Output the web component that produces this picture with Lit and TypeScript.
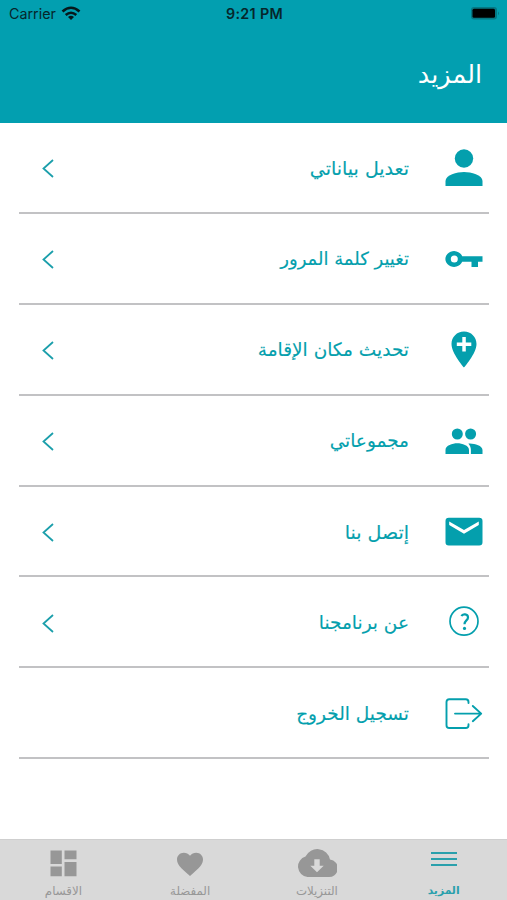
import { LitElement, html, css, svg, nothing } from "lit";
import { customElement } from "lit/decorators.js";

const icons: Record<string, unknown> = {
  person: svg`<circle cx="20" cy="10.500" r="9.200"/><path d="M1.500 38V33C1.500 27 13 24 20 24S38.500 27 38.500 33V38Z"/>`,
  key: svg`<path fill-rule="evenodd" d="M18.200 17.200A8.700 7.900 0 1 0 18.200 22.800H27.500V28H34V22.800H38.500V17.200ZM10.300 16.500a3.500 3.500 0 1 1 0 7a3.500 3.500 0 0 1 0-7Z"/>`,
  place: svg`<path fill-rule="evenodd" d="M20 1.500C12.900 1.500 7.500 7 7.500 14C7.500 23.500 20 37.500 20 37.500S32.500 23.500 32.500 14C32.500 7 27.100 1.500 20 1.500ZM18.300 7h3.500v5.400h5.500v3.500h-5.500v5.500h-3.500v-5.500h-5.500v-3.500h5.500Z"/>`,
  group: svg`<circle cx="13.300" cy="13" r="5.500"/><circle cx="26.600" cy="13" r="5.500"/><path d="M1.500 33v-4c0-4.500 7-6.700 11.800-6.700s11.700 2.200 11.700 6.700v4ZM26 22.500c5 .3 12.500 2 12.500 6.500v4H26.900v-4c0-2.600-1-4.700-2.500-6.500Z"/>`,
  mail: svg`<path fill-rule="evenodd" d="M4.800 5.800H35.200q3.300 0 3.300 3.300V30.200q0 3.300-3.300 3.300H4.800q-3.300 0-3.300-3.300V9.100q0-3.300 3.300-3.300ZM5.200 9.400V13L20 21.700L34.800 13V9.400L20 18.100Z"/>`,
  help: svg`<circle cx="20" cy="18.200" r="14" fill="none" stroke="currentColor" stroke-width="1.700"/><path d="M17.500 13.200C18.500 10.400 24 10.700 24 14.400C24 17.400 20.500 17.400 20.500 21.200" fill="none" stroke="currentColor" stroke-width="2.200"/><circle cx="20.500" cy="25.400" r="1.600"/>`,
  exit: svg`<path d="M24.500 9V8q0-2.800-2.800-2.800H5.300Q2.500 5.200 2.500 8V31.200Q2.500 34 5.300 34H21.700q2.800 0 2.800-2.800V30.200M11 19.600H37M28.800 12L37.200 19.600L28.800 27.200" fill="none" stroke="currentColor" stroke-width="1.900" stroke-linecap="round" stroke-linejoin="round"/>`,
  menu: svg`<path d="M7 9H33M7 15H33M7 21H33" fill="none" stroke="currentColor" stroke-width="1.800"/>`,
  cloud: svg`<path fill-rule="evenodd" d="M33 15.500A13 13 0 0 0 8.500 12.500A10.500 10.500 0 0 0 10.500 33H31A8.800 8.800 0 0 0 33 15.500ZM17.300 15.200h5.400v6.500h4L20 28.200L13.300 21.700h4Z"/>`,
  heart: svg`<path d="M20 32L18 30.300C11 24 7 20.500 7 15.500C7 11.500 10 8.700 13.800 8.700C16.200 8.700 18.500 9.800 20 11.800C21.500 9.800 23.800 8.700 26.200 8.700C30 8.700 33 11.500 33 15.500C33 20.500 29 24 22 30.300Z"/>`,
  grid: svg`<path d="M7.500 6.500H18.800V20H7.500ZM21.500 6.500H33.500V15.200H21.500ZM21.500 18H33.500V32.300H21.500ZM7.500 22.500H18.800V32.300H7.500Z"/>`,
};

const icon = (name: string) => html`<svg class="icon" viewBox="0 0 40 40" fill="currentColor">${icons[name]}</svg>`;

const rows = [
  { icon: "person", label: "تعديل بياناتي", arrow: true, size: "wide" },
  { icon: "key", label: "تغيير كلمة المرور", arrow: true, size: "tight" },
  { icon: "place", label: "تحديث مكان الإقامة", arrow: true, size: "" },
  { icon: "group", label: "مجموعاتي", arrow: true, size: "" },
  { icon: "mail", label: "إتصل بنا", arrow: true, size: "wide" },
  { icon: "help", label: "عن برنامجنا", arrow: true, size: "" },
  { icon: "exit", label: "تسجيل الخروج", arrow: false, size: "" },
];

const tabs = [
  { icon: "menu", label: "المزيد", active: true },
  { icon: "cloud", label: "التنزيلات", active: false },
  { icon: "heart", label: "المفضلة", active: false },
  { icon: "grid", label: "الاقسام", active: false },
];

@customElement("app-root")
export class AppRoot extends LitElement {
  static styles = css`
    :host { display: flex; flex-direction: column; height: 900px; background: #fff; color: #049fad; overflow: hidden; font-family: "DejaVu Sans", sans-serif; }
    .header { height: 123px; flex: none; background: #029fb0; direction: ltr; }
    .status { height: 27px; display: grid; grid-template-columns: 1fr auto 1fr; align-items: center; padding: 0 7px 0 9px; color: #06262b; font: 14.300px/27px Inter, sans-serif; }
    .carrier { display: flex; align-items: center; gap: 5px; }
    .time { font-weight: 600; font-size: 14.300px; letter-spacing: 0.350px; line-height: 27px; }
    .battery { justify-self: end; }
    .title { direction: rtl; color: #fff; font-size: 25.500px; line-height: 40px; margin: 27px 25px 0; font-weight: 400; }
    .list { direction: rtl; padding: 0 18px 0 19px; flex: 1; }
    .row { height: 90.900px; box-sizing: border-box; border-bottom: 2px solid #c2c2c4; display: flex; align-items: center; padding: 2px 5px 0 22px; }
    .icon { width: 40px; height: 40px; flex: none; display: block; }
    .label { margin-right: 35px; flex: 1; font-size: 18.500px; line-height: 30px; white-space: nowrap; -webkit-text-stroke: 0.150px currentColor; }
    .wide { font-size: 19px; }
    .tight { font-size: 18px; }
    .tabs { direction: rtl; height: 61px; flex: none; box-sizing: border-box; border-top: 1px solid #cfcfcf; background: #d9d9d9; display: grid; grid-template-columns: repeat(4, 1fr); color: #979797; }
    .tab { display: flex; flex-direction: column; align-items: center; padding-top: 4px; font-size: 11.800px; line-height: 14px; }
    .active { color: #2aa0ac; font-weight: 700; font-size: 10.800px; }
  `;

  render() {
    return html`
      <div class="header">
        <div class="status">
          <div class="carrier"><span>Carrier</span>
            <svg width="20" height="15" viewBox="0 0 20 15" fill="none" stroke="#06181b" stroke-width="2.600"><path d="M1.500 5.500Q10-2 18.500 5.500M4.700 9Q10 4.500 15.300 9"/><path d="M10 14L7 11Q10 8.700 13 11Z" fill="#06181b" stroke="none"/></svg>
          </div>
          <span class="time">9:21 PM</span>
          <svg class="battery" width="30" height="15" viewBox="0 0 30 15"><rect x="1" y="1" width="26" height="12.500" rx="3" fill="#057884"/><rect x="2.500" y="2.700" width="22.500" height="9" rx="1.500" fill="#000"/><path d="M28 5.500q2 1.800 0 3.800Z" fill="#057884"/></svg>
        </div>
        <div class="title">المزيد</div>
      </div>
      <div class="list">
        ${rows.map((r) => html`<div class="row">${icon(r.icon)}<span class="label ${r.size}">${r.label}</span>
          ${r.arrow ? html`<svg width="14" height="20" viewBox="0 0 14 20" fill="none" stroke="#1b9fab" stroke-width="1.800"><path d="M12 2L2.500 10.500L12 19"/></svg>` : nothing}
        </div>`)}
      </div>
      <div class="tabs">
        ${tabs.map((t) => html`<div class="tab ${t.active ? "active" : ""}">${icon(t.icon)}<span>${t.label}</span></div>`)}
      </div>`;
  }
}
